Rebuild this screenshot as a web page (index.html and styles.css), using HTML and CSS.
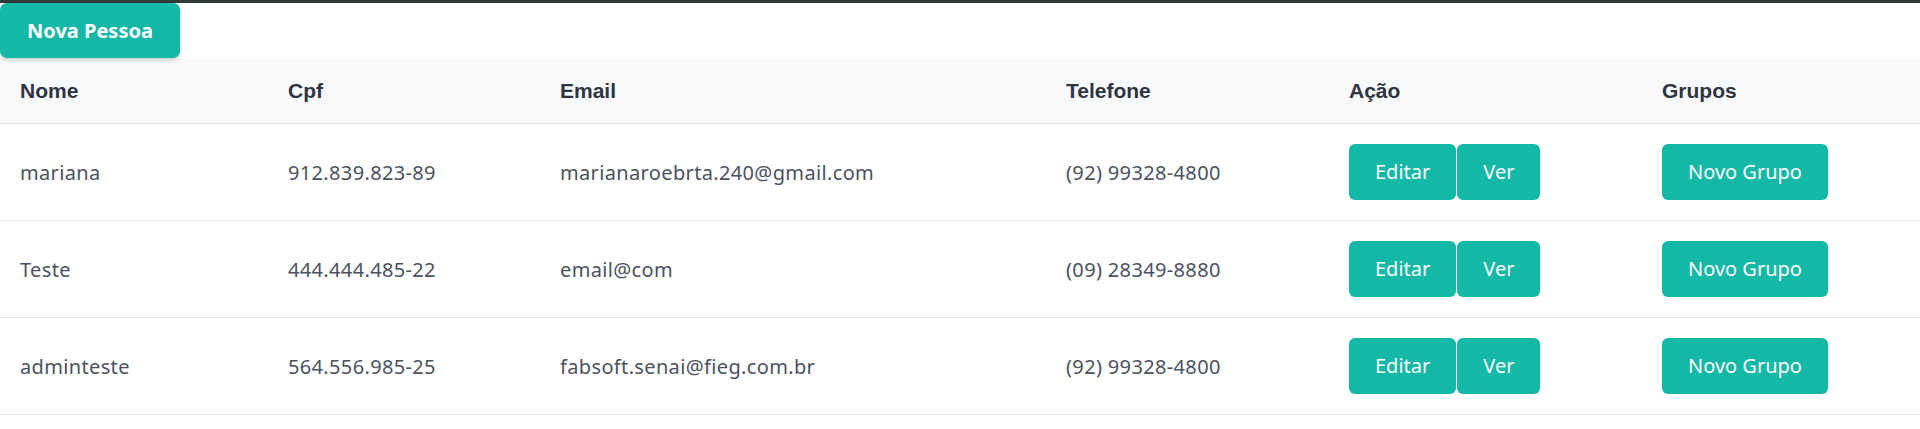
FILE: index.html
```html
<!DOCTYPE html>
<html lang="pt-BR">
<head>
<meta charset="utf-8">
<title>Pessoas</title>
<link rel="stylesheet" href="styles.css">
</head>
<body>
<div class="topbar"></div>
<div class="toolbar">
  <button class="btn btn-primary">Nova Pessoa</button>
</div>
<table class="people">
  <colgroup>
    <col class="c-nome"><col class="c-cpf"><col class="c-email"><col class="c-tel"><col class="c-acao"><col class="c-grupos">
  </colgroup>
  <thead>
    <tr><th>Nome</th><th>Cpf</th><th>Email</th><th>Telefone</th><th>Ação</th><th>Grupos</th></tr>
  </thead>
  <tbody>
    <tr>
      <td>mariana</td><td>912.839.823-89</td><td>marianaroebrta.240@gmail.com</td><td>(92) 99328-4800</td>
      <td><div class="actions"><button class="btn">Editar</button><button class="btn">Ver</button></div></td>
      <td><button class="btn">Novo Grupo</button></td>
    </tr>
    <tr>
      <td>Teste</td><td>444.444.485-22</td><td>email@com</td><td>(09) 28349-8880</td>
      <td><div class="actions"><button class="btn">Editar</button><button class="btn">Ver</button></div></td>
      <td><button class="btn">Novo Grupo</button></td>
    </tr>
    <tr>
      <td>adminteste</td><td>564.556.985-25</td><td>fabsoft.senai@fieg.com.br</td><td>(92) 99328-4800</td>
      <td><div class="actions"><button class="btn">Editar</button><button class="btn">Ver</button></div></td>
      <td><button class="btn">Novo Grupo</button></td>
    </tr>
  </tbody>
</table>
</body>
</html>
```
FILE: styles.css
```css
html, body {
  margin: 0;
  padding: 0;
  background: #ffffff;
}
body {
  font-family: "Noto Sans", "Liberation Sans", sans-serif;
  color: #4b5260;
}
.topbar {
  height: 3px;
  background: #2f3a38;
}
.toolbar {
  display: flex;
  height: 55px;
}
.btn {
  font-family: "Noto Sans", "Liberation Sans", sans-serif;
  font-size: 20px;
  letter-spacing: 0;
  color: #ffffff;
  background: #14b8a6;
  border: none;
  border-radius: 6px;
  height: 56px;
  padding: 0 26px;
  margin: 0;
  cursor: pointer;
  line-height: 1;
}
.btn-primary {
  height: 55px;
  width: 180px;
  padding: 0;
  font-weight: 700;
  border-radius: 7px;
  box-shadow: 0 2px 4px rgba(0, 0, 0, 0.18);
}
.people {
  width: 100%;
  border-collapse: collapse;
  table-layout: fixed;
}
.c-nome { width: 268px; }
.c-cpf { width: 272px; }
.c-email { width: 506px; }
.c-tel { width: 283px; }
.c-acao { width: 313px; }
.c-grupos { width: auto; }
.people thead tr {
  background: #f8f9fb;
}
.people th {
  text-align: left;
  font-family: "Liberation Sans", Arial, sans-serif;
  font-weight: 700;
  font-size: 21px;
  line-height: 25px;
  color: #2f3442;
  padding: 20px;
  border-bottom: 1px solid #e3e5ea;
}
.people td {
  font-size: 20px;
  letter-spacing: 0.35px;
  line-height: 25px;
  padding: 20px;
  border-bottom: 1px solid #e5e6e9;
  vertical-align: middle;
  white-space: nowrap;
}
.people td .btn {
  display: block;
}
.actions {
  display: flex;
  gap: 1px;
}
```
